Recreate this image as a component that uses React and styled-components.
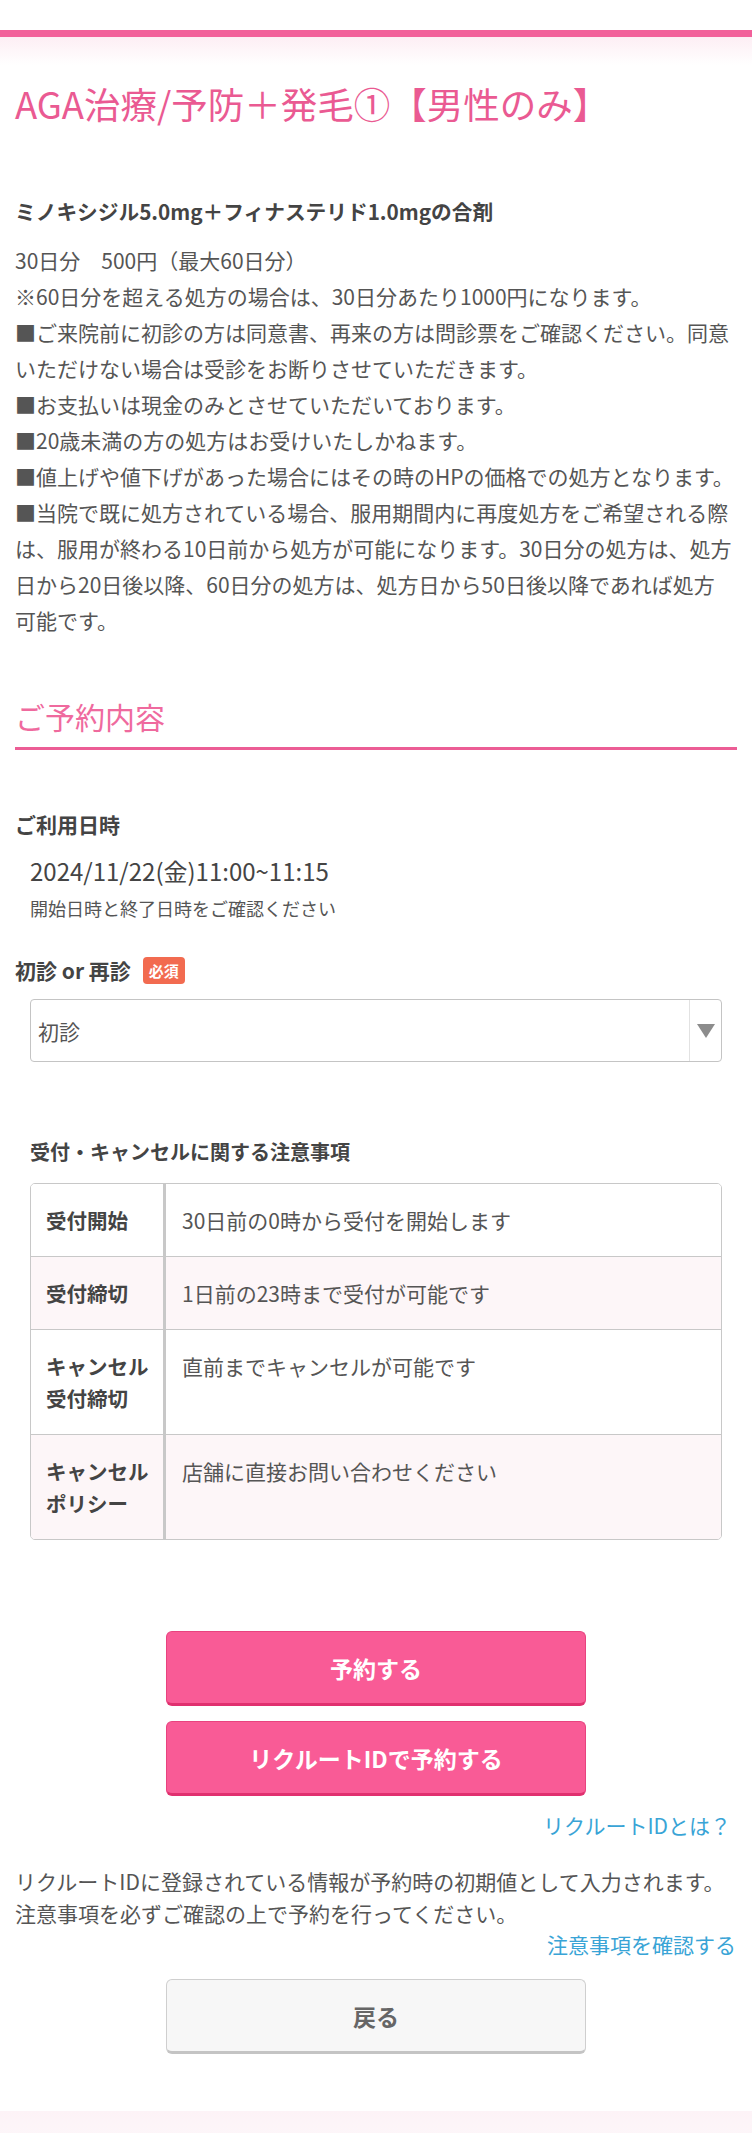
import React from 'react'
import styled, { createGlobalStyle } from 'styled-components'

const GlobalStyle = createGlobalStyle`
  body {
    margin: 0;
    background: #fff;
    font-family: "Noto Sans CJK JP", "Noto Sans", sans-serif;
    color: #555;
  }
`

const notes = [
  { label: ['受付開始'], text: '30日前の0時から受付を開始します' },
  { label: ['受付締切'], text: '1日前の23時まで受付が可能です' },
  { label: ['キャンセル', '受付締切'], text: '直前までキャンセルが可能です' },
  { label: ['キャンセル', 'ポリシー'], text: '店舗に直接お問い合わせください' },
]

const App = () => (
  <>
    <GlobalStyle />
    <Header>
      <Stripe />
      <Glow />
    </Header>
    <Main>
      <Title>AGA治療/予防＋発毛①【男性のみ】</Title>
      <Lead>ミノキシジル5.0mg＋フィナステリド1.0mgの合剤</Lead>
      <Body>
        30日分　500円（最大60日分）
        <br />
        ※60日分を超える処方の場合は、30日分あたり1000円になります。
        <br />
        ■ご来院前に初診の方は同意書、再来の方は問診票をご確認ください。同意
        <br />
        いただけない場合は受診をお断りさせていただきます。
        <br />
        ■お支払いは現金のみとさせていただいております。
        <br />
        ■20歳未満の方の処方はお受けいたしかねます。
        <br />
        ■値上げや値下げがあった場合にはその時のHPの価格での処方となります。
        <br />
        ■当院で既に処方されている場合、服用期間内に再度処方をご希望される際
        <br />
        は、服用が終わる10日前から処方が可能になります。30日分の処方は、処方
        <br />
        日から20日後以降、60日分の処方は、処方日から50日後以降であれば処方
        <br />
        可能です。
      </Body>

      <SectionTitle>ご予約内容</SectionTitle>

      <FieldLabel>ご利用日時</FieldLabel>
      <DateText>2024/11/22(金)11:00~11:15</DateText>
      <Hint>開始日時と終了日時をご確認ください</Hint>

      <LabelRow>
        <FieldLabel as="span" $flat>初診 or 再診</FieldLabel>
        <Badge>必須</Badge>
      </LabelRow>
      <SelectBox>
        <SelectValue>初診</SelectValue>
        <ArrowCell>
          <Triangle />
        </ArrowCell>
      </SelectBox>

      <NoticeTitle>受付・キャンセルに関する注意事項</NoticeTitle>
      <Table>
        {notes.map((n, i) => (
          <Row key={i} $shade={i % 2 === 1}>
            <Label>
              {n.label.map((l, j) => (
                <div key={j}>{l}</div>
              ))}
            </Label>
            <Value>{n.text}</Value>
          </Row>
        ))}
      </Table>

      <Actions>
        <Button $primary>予約する</Button>
        <Button $primary>リクルートIDで予約する</Button>
      </Actions>
      <LinkRow $top={14} $right={6}>
        <Link href="#">リクルートIDとは？</Link>
      </LinkRow>
      <Info>
        リクルートIDに登録されている情報が予約時の初期値として入力されます。
        <br />
        注意事項を必ずご確認の上で予約を行ってください。
      </Info>
      <LinkRow $top={0} $right={1}>
        <Link href="#">注意事項を確認する</Link>
      </LinkRow>
      <BackWrap>
        <Button>戻る</Button>
      </BackWrap>
    </Main>
    <Footer />
  </>
)

export default App

const Header = styled.header`
  padding-top: 30px;
`
const Stripe = styled.div`
  height: 7px;
  background: #f2609a;
`
const Glow = styled.div`
  height: 28px;
  background: linear-gradient(#fdeef4, #ffffff);
`
const Main = styled.main`
  padding: 0 15px;
`
const Title = styled.h1`
  margin: 15px 0 0;
  font-size: 36.5px;
  line-height: 48px;
  font-weight: 400;
  color: #ea5a92;
`
const Lead = styled.h2`
  margin: 65px 0 0;
  font-size: 20.7px;
  line-height: 36px;
  font-weight: 700;
  color: #444;
`
const Body = styled.p`
  margin: 13px 0 0;
  font-size: 21px;
  line-height: 36px;
  color: #555;
`
const SectionTitle = styled.h2`
  margin: 58px 0 0;
  padding-bottom: 11px;
  border-bottom: 3px solid #ec5d95;
  font-size: 30px;
  line-height: 40px;
  font-weight: 400;
  color: #ef6a9e;
`
const FieldLabel = styled.h3`
  display: block;
  margin: ${(p) => (p.$flat ? '0' : '59px 0 0')};
  font-size: 21px;
  line-height: 30px;
  font-weight: 700;
  color: #444;
`
const DateText = styled.div`
  margin-top: 15px;
  padding-left: 15px;
  font-size: 24px;
  line-height: 34px;
  color: #444;
`
const Hint = styled.div`
  margin-top: 7px;
  padding-left: 15px;
  font-size: 18px;
  line-height: 26px;
  color: #555;
`
const LabelRow = styled.div`
  margin-top: 34px;
  display: flex;
  align-items: center;
  gap: 12px;
  height: 30px;
`
const Badge = styled.span`
  display: inline-block;
  height: 27px;
  padding: 0 6px;
  border-radius: 4px;
  background: #f26b50;
  color: #fff;
  font-size: 15px;
  font-weight: 700;
  line-height: 27px;
`
const SelectBox = styled.div`
  margin: 14px 15px 0;
  height: 63px;
  box-sizing: border-box;
  border: 1px solid #c4c4c4;
  border-radius: 4px;
  display: flex;
  align-items: stretch;
  background: #fff;
`
const SelectValue = styled.div`
  flex: 1;
  display: flex;
  align-items: center;
  padding-left: 7px;
  font-size: 21px;
  color: #555;
`
const ArrowCell = styled.div`
  width: 31px;
  border-left: 1px solid #e2e2e2;
  display: flex;
  align-items: center;
  justify-content: center;
`
const Triangle = styled.span`
  width: 0;
  height: 0;
  border-left: 9px solid transparent;
  border-right: 9px solid transparent;
  border-top: 14px solid #8c8c8c;
`
const NoticeTitle = styled.h3`
  margin: 75px 0 0;
  padding-left: 15px;
  font-size: 20px;
  line-height: 30px;
  font-weight: 700;
  color: #444;
`
const Table = styled.div`
  margin: 16px 15px 0;
  border: 1px solid #c8c8c8;
  border-radius: 5px;
  overflow: hidden;
`
const Row = styled.div`
  display: grid;
  grid-template-columns: 135px 1fr;
  background: ${(p) => (p.$shade ? '#fdf6f8' : '#fff')};
  & + & {
    border-top: 1px solid #c8c8c8;
  }
`
const Label = styled.div`
  padding: 20px 4px 20px 15px;
  border-right: 3px solid #c8c8c8;
  font-size: 20.5px;
  line-height: 32px;
  font-weight: 700;
  color: #444;
  white-space: nowrap;
`
const Value = styled.div`
  padding: 20px 16px;
  font-size: 21px;
  line-height: 32px;
  color: #555;
`
const Actions = styled.div`
  margin-top: 91px;
  display: flex;
  flex-direction: column;
  align-items: center;
  gap: 15px;
`
const Button = styled.button`
  width: 420px;
  height: 75px;
  box-sizing: border-box;
  border-radius: 6px;
  font-family: inherit;
  font-size: 23px;
  font-weight: 700;
  cursor: pointer;
  background: ${(p) => (p.$primary ? '#f95b96' : '#f7f7f7')};
  color: ${(p) => (p.$primary ? '#fff' : '#666')};
  border: 1px solid ${(p) => (p.$primary ? '#e8437f' : '#cfcfcf')};
  border-bottom: 3px solid ${(p) => (p.$primary ? '#e0306f' : '#c4c4c4')};
`
const LinkRow = styled.div`
  margin-top: ${(p) => p.$top}px;
  padding-right: ${(p) => p.$right}px;
  text-align: right;
  line-height: 30px;
`
const Link = styled.a`
  font-size: 21px;
  color: #39a4d6;
  text-decoration: none;
`
const Info = styled.p`
  margin: 23px 0 0;
  font-size: 21px;
  line-height: 32px;
  color: #555;
`
const BackWrap = styled.div`
  margin-top: 18px;
  display: flex;
  justify-content: center;
`
const Footer = styled.footer`
  margin-top: 57px;
  height: 25px;
  background: linear-gradient(#fdf3f7, #fdf6f9);
`
